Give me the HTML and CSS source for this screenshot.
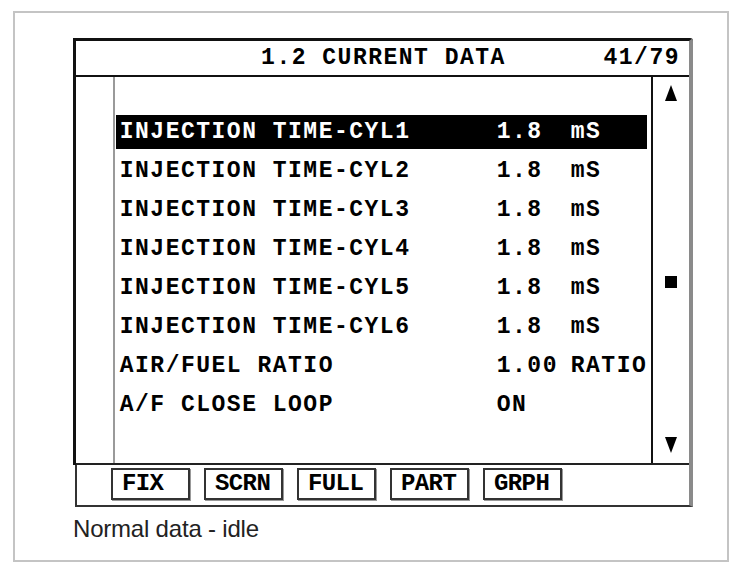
FILE: index.html
```html
<!DOCTYPE html>
<html lang="en">
<head>
    <meta charset="UTF-8">
    <meta name="viewport" content="width=device-width, initial-scale=1.0">
    <title>Current Data - Normal data idle</title>
    <link rel="stylesheet" href="styles.css">
</head>
<body>
    <div id="frame">
        <!-- SCANNER SCREEN -->
        <div id="screen">
            <div id="title">
                <span class="title-text">1.2 CURRENT DATA</span>
                <span class="page-no">41/79</span>
            </div>
            <div id="data">
                <div class="gutter"></div>
                <div class="list">
                    <div class="row selected"><span class="name">INJECTION TIME-CYL1</span><span class="val">1.8</span><span class="unit">mS</span></div>
                    <div class="row"><span class="name">INJECTION TIME-CYL2</span><span class="val">1.8</span><span class="unit">mS</span></div>
                    <div class="row"><span class="name">INJECTION TIME-CYL3</span><span class="val">1.8</span><span class="unit">mS</span></div>
                    <div class="row"><span class="name">INJECTION TIME-CYL4</span><span class="val">1.8</span><span class="unit">mS</span></div>
                    <div class="row"><span class="name">INJECTION TIME-CYL5</span><span class="val">1.8</span><span class="unit">mS</span></div>
                    <div class="row"><span class="name">INJECTION TIME-CYL6</span><span class="val">1.8</span><span class="unit">mS</span></div>
                    <div class="row"><span class="name">AIR/FUEL RATIO</span><span class="val">1.00</span><span class="unit">RATIO</span></div>
                    <div class="row"><span class="name">A/F CLOSE LOOP</span><span class="val">ON</span><span class="unit"></span></div>
                </div>
                <div class="scroll">
                    <svg class="arrow up" width="12" height="16" viewBox="0 0 12 16"><path d="M6 0 L12 16 L0 16 Z" fill="#000"/></svg>
                    <div class="thumb"></div>
                    <svg class="arrow down" width="12" height="16" viewBox="0 0 12 16"><path d="M0 0 L12 0 L6 16 Z" fill="#000"/></svg>
                </div>
            </div>
        </div>
        <!-- SOFT KEYS -->
        <div id="toolbar">
            <span class="key">FIX</span>
            <span class="key">SCRN</span>
            <span class="key">FULL</span>
            <span class="key">PART</span>
            <span class="key">GRPH</span>
        </div>
        <p id="caption">Normal data - idle</p>
    </div>
</body>
</html>
```

FILE: styles.css
```css
*{
    margin:0;
    box-sizing: border-box;
}
body{
    margin: 0;
    padding: 0;
    background-color: white;
    font-family: "Liberation Mono", monospace;
}
/* OUTER FRAME */
#frame{
    margin: 11px 0 0 13px;
    width: 716px;
    height: 551px;
    border: 2px solid #c4c4c4;
    padding: 25px 0 0 58px;
}
/* SCREEN */
#screen{
    width: 620px;
    border-top: 3px solid #111;
    border-left: 3px solid #111;
    border-right: 4px solid #8a8a8a;
    border-top-right-radius: 3px;
    font-weight: bold;
    font-size: 23px;
    letter-spacing: 1.5px;
    color: #000;
}
#title{
    height: 36px;
    border-bottom: 2px solid #111;
    display: flex;
    align-items: center;
    position: relative;
}
#title .title-text{
    flex: 1;
    text-align: center;
    padding-left: 2px;
}
#title .page-no{
    position: absolute;
    right: 9px;
}
/* DATA AREA */
#data{
    height: 388px;
    border-bottom: 2px solid #222;
    display: flex;
}
.gutter{
    width: 41px;
    border-right: 2px solid #9a9a9a;
}
.list{
    flex: 1;
    padding: 38px 4px 0 1px;
    display: flex;
    flex-direction: column;
    gap: 5px;
}
.row{
    height: 34px;
    display: grid;
    grid-template-columns: 377px 74px auto;
    align-items: center;
    padding-left: 4px;
    white-space: pre;
}
.row.selected{
    background-color: #000;
    color: #fff;
}
/* SCROLL COLUMN */
.scroll{
    width: 40px;
    border-left: 2px solid #111;
    display: flex;
    flex-direction: column;
    align-items: center;
    padding: 8px 0 10px 0;
}
.thumb{
    width: 12px;
    height: 12px;
    background-color: #000;
    margin-top: 175px;
}
.arrow.down{
    margin-top: auto;
}
/* SOFT KEYS */
#toolbar{
    width: 618px;
    margin-left: 2px;
    height: 42px;
    border-left: 2px solid #333;
    border-bottom: 2px solid #333;
    border-right: 4px solid #8a8a8a;
    display: flex;
    gap: 14px;
    padding: 3px 0 0 34px;
}
.key{
    width: 79px;
    height: 32px;
    border: 2px solid #333;
    box-shadow: 1px 1px 0 #999;
    font-weight: bold;
    font-size: 24px;
    letter-spacing: -0.6px;
    line-height: 28px;
    padding-left: 9px;
    color: #000;
}
/* CAPTION */
#caption{
    margin-top: 10px;
    font-family: "Liberation Sans", Arial, sans-serif;
    font-size: 24px;
    line-height: 24px;
    color: #222;
    letter-spacing: -0.2px;
}
```
